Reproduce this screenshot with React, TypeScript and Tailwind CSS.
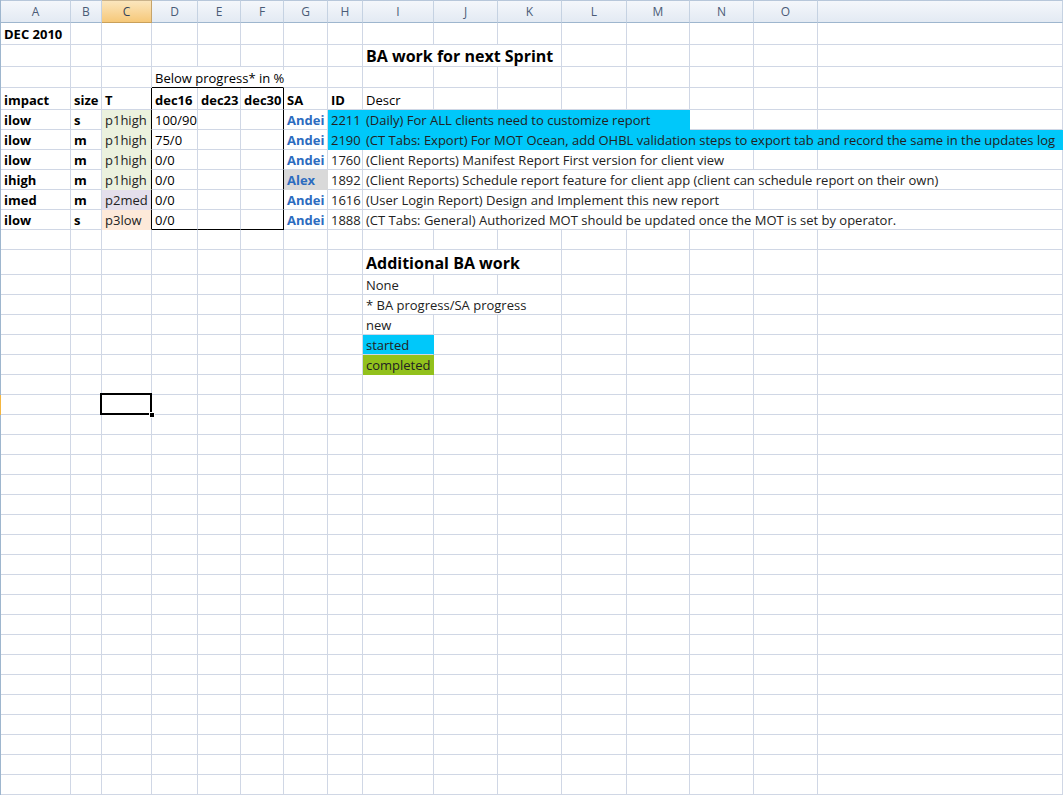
import { twMerge } from 'tailwind-merge';
import type { ReactNode } from 'react';

// Excel 2007 sheet — "BA work for next Sprint"

const COLS =
  'grid grid-cols-[1px_70px_31px_50px_46px_43px_43px_44px_35px_71px_64px_64px_65px_63px_64px_64px_1fr]';

const HEAD = ['A', 'B', 'C', 'D', 'E', 'F', 'G', 'H', 'I', 'J', 'K', 'L', 'M', 'N', 'O', ''];

function Cell({ className = '', children }: { className?: string; children?: ReactNode }) {
  return (
    <div
      className={twMerge(
        'relative flex items-end overflow-hidden whitespace-nowrap border-r border-b border-[#d0d7e5] px-[3px] pb-[0px] leading-[17px]',
        className
      )}
    >
      {children}
    </div>
  );
}

function Strip({ active = false }: { active?: boolean }) {
  return <div className={active ? 'bg-[#f4b640]' : 'bg-[#9eb6ce]'} />;
}

type Task = {
  impact: string;
  size: string;
  t: string;
  tBg: string;
  d: string;
  sa: string;
  saBg?: string;
  id: string;
  desc: string;
  started?: boolean;
  descSpan: string;
};

const tasks: Task[] = [
  { impact: 'ilow', size: 's', t: 'p1high', tBg: 'bg-[#ebf1de]', d: '100/90', sa: 'Andei', id: '2211', desc: '(Daily) For ALL clients need to customize report', started: true, descSpan: 'col-span-5' },
  { impact: 'ilow', size: 'm', t: 'p1high', tBg: 'bg-[#ebf1de]', d: '75/0', sa: 'Andei', id: '2190', desc: '(CT Tabs: Export) For MOT Ocean, add OHBL validation steps to export tab and record the same in the updates log', started: true, descSpan: 'col-span-8' },
  { impact: 'ilow', size: 'm', t: 'p1high', tBg: 'bg-[#ebf1de]', d: '0/0', sa: 'Andei', id: '1760', desc: '(Client Reports) Manifest Report First version for client view', descSpan: 'col-span-6' },
  { impact: 'ihigh', size: 'm', t: 'p1high', tBg: 'bg-[#ebf1de]', d: '0/0', sa: 'Alex', saBg: 'bg-[#d9d9d9] border-transparent', id: '1892', desc: '(Client Reports) Schedule report feature for client app (client can schedule report on their own)', descSpan: 'col-span-8' },
  { impact: 'imed', size: 'm', t: 'p2med', tBg: 'bg-[#e4dfec]', d: '0/0', sa: 'Andei', id: '1616', desc: '(User Login Report) Design and Implement this new report', descSpan: 'col-span-6' },
  { impact: 'ilow', size: 's', t: 'p3low', tBg: 'bg-[#fde9d9]', d: '0/0', sa: 'Andei', id: '1888', desc: '(CT Tabs: General) Authorized MOT should be updated once the MOT is set by operator.', descSpan: 'col-span-8' },
];

function EmptyRow({ h = 'h-[20px]', selected = false }: { h?: string; selected?: boolean }) {
  return (
    <div className={`${COLS} ${h}`}>
      <Strip active={selected} />
      {Array.from({ length: 16 }).map((_, i) => (
        <Cell key={i} className={selected && i === 2 ? 'overflow-visible z-10' : ''}>
          {selected && i === 2 && (
            <>
              <div className="absolute left-[-2px] top-[-2px] right-[-1px] bottom-[-1px] border-2 border-black" />
              <div className="absolute right-[-4px] bottom-[-4px] h-[6px] w-[6px] border border-white bg-black" />
            </>
          )}
        </Cell>
      ))}
    </div>
  );
}

export default function App() {
  return (
    <div className="h-[795px] w-[1063px] overflow-hidden bg-white font-['Open_Sans',sans-serif] text-[13px] text-black">
      {/* column headers */}
      <div className={`${COLS} h-[23px]`}>
        <div className="bg-[#9eb6ce]" />
        {HEAD.map((c, i) => (
          <div
            key={i}
            className={
              i === 2
                ? 'flex items-center justify-center border-t border-r border-b border-t-[#c9b28a] border-r-[#c6a46a] border-b-[#c9a05a] bg-linear-to-b from-[#fbe6bd] to-[#f6c878] pt-[1px] text-[12px] text-[#34435a]'
                : 'flex items-center justify-center border-t border-r border-b border-t-[#b7c7da] border-r-[#c5d2e2] border-b-[#9eb6ce] bg-linear-to-b from-[#f4f7fb] to-[#e3eaf3] pt-[1px] text-[12px] text-[#4a5b76]'
            }
          >
            {c}
          </div>
        ))}
      </div>

      {/* row 1 */}
      <div className={`${COLS} h-[22px]`}>
        <Strip />
        <Cell className="pb-[1px] font-bold">DEC 2010</Cell>
        {Array.from({ length: 15 }).map((_, i) => (
          <Cell key={i} />
        ))}
      </div>

      {/* row 2 */}
      <div className={`${COLS} h-[22px]`}>
        <Strip />
        {Array.from({ length: 8 }).map((_, i) => (
          <Cell key={i} />
        ))}
        <Cell className="col-span-3 pb-[0px] text-[16px] leading-[20px] font-bold">BA work for next Sprint</Cell>
        {Array.from({ length: 5 }).map((_, i) => (
          <Cell key={i} />
        ))}
      </div>

      {/* row 3 */}
      <div className={`${COLS} h-[21px]`}>
        <Strip />
        <Cell />
        <Cell />
        <Cell />
        <Cell className="z-10 col-span-3 overflow-visible border-b-black">
          <span className="relative bg-white pr-[1px]">Below progress* in %</span>
        </Cell>
        {Array.from({ length: 10 }).map((_, i) => (
          <Cell key={i} />
        ))}
      </div>

      {/* row 4 — headers */}
      <div className={`${COLS} h-[22px]`}>
        <Strip />
        <Cell className="font-bold">impact</Cell>
        <Cell className="font-bold">size</Cell>
        <Cell className="border-r-black font-bold">T</Cell>
        <Cell className="font-bold">dec16</Cell>
        <Cell className="font-bold">dec23</Cell>
        <Cell className="border-r-black font-bold">dec30</Cell>
        <Cell className="font-bold">SA</Cell>
        <Cell className="font-bold">ID</Cell>
        <Cell>Descr</Cell>
        {Array.from({ length: 7 }).map((_, i) => (
          <Cell key={i} />
        ))}
      </div>

      {/* rows 5-10 */}
      {tasks.map((r, idx) => {
        const last = idx === tasks.length - 1;
        const fill = r.started ? 'bg-[#00c8fa] border-transparent' : '';
        const rest = r.descSpan === 'col-span-5' ? 3 : r.descSpan === 'col-span-6' ? 2 : 0;
        return (
          <div key={r.id} className={`${COLS} h-[20px]`}>
            <Strip />
            <Cell className="font-bold">{r.impact}</Cell>
            <Cell className="font-bold">{r.size}</Cell>
            <Cell className={twMerge(r.tBg, 'border-transparent border-r-black text-[#222]')}>{r.t}</Cell>
            <Cell className={last ? 'border-b-black' : ''}>{r.d}</Cell>
            <Cell className={last ? 'border-b-black' : ''} />
            <Cell className={last ? 'border-b-black border-r-black' : 'border-r-black'} />
            <Cell className={twMerge('font-bold text-[#2c6cbf]', r.saBg ?? '')}>{r.sa}</Cell>
            <Cell className={twMerge(fill, 'text-[#222]')}>{r.id}</Cell>
            <Cell className={twMerge(r.descSpan, fill, 'text-[#222]')}>{r.desc}</Cell>
            {Array.from({ length: rest }).map((_, i) => (
              <Cell key={i} />
            ))}
          </div>
        );
      })}

      <EmptyRow />

      {/* row 12 */}
      <div className={`${COLS} h-[25px]`}>
        <Strip />
        {Array.from({ length: 8 }).map((_, i) => (
          <Cell key={i} />
        ))}
        <Cell className="col-span-3 pb-[1px] text-[16px] leading-[20px] font-bold">Additional BA work</Cell>
        {Array.from({ length: 5 }).map((_, i) => (
          <Cell key={i} />
        ))}
      </div>

      {/* legend */}
      {[
        { text: 'None', cls: '', span: 1 },
        { text: '* BA progress/SA progress', cls: 'col-span-3', span: 3 },
        { text: 'new', cls: '', span: 1 },
        { text: 'started', cls: 'bg-[#00c8fa] border-transparent border-b-[#d0d7e5]', span: 1 },
        { text: 'completed', cls: 'bg-[#92c11c] border-transparent', span: 1 },
      ].map((l) => (
        <div key={l.text} className={`${COLS} h-[20px]`}>
          <Strip />
          {Array.from({ length: 8 }).map((_, i) => (
            <Cell key={i} />
          ))}
          <Cell className={twMerge(l.cls, 'text-[#222]')}>{l.text}</Cell>
          {Array.from({ length: 8 - l.span }).map((_, i) => (
            <Cell key={i} />
          ))}
        </div>
      ))}

      <EmptyRow />
      <EmptyRow selected />
      {Array.from({ length: 20 }).map((_, i) => (
        <EmptyRow key={i} />
      ))}
    </div>
  );
}
